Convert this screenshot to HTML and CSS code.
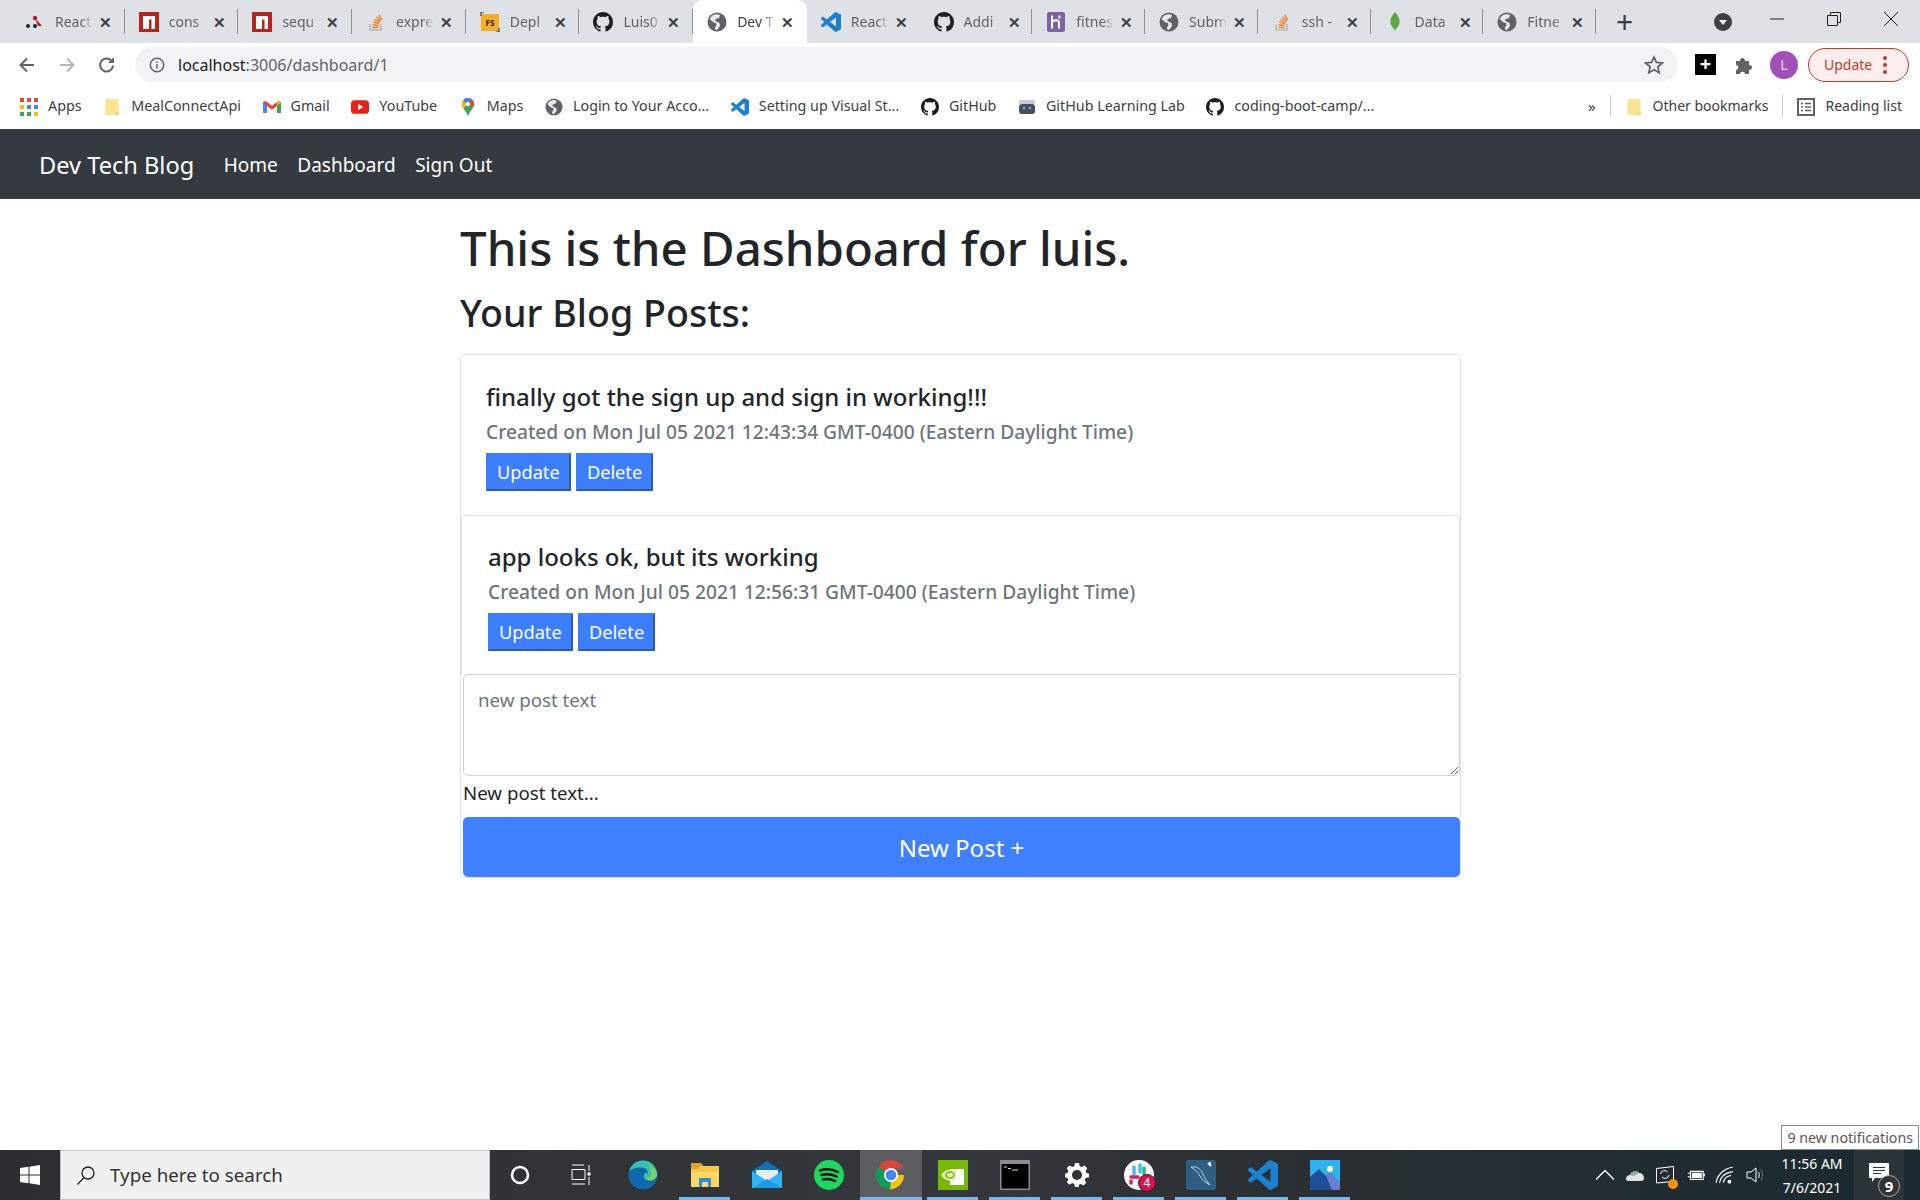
FILE: index.html
```html
<!doctype html>
<html>
<head>
<title>Dev Tech Blog</title>
<link rel="stylesheet" href="styles.css">
</head>
<body>

<!-- shared icons -->
<svg class="sprite">
  <symbol id="globe" viewBox="0 0 20 20">
    <circle cx="10" cy="10" r="9.5" fill="#5f6368"/>
    <path d="M9 2.2C6 2.6 3.8 4.4 2.7 7l3.8 3.6 2.6.4.3 2.6-1.6 2.2.7 2c.5.1 1 .1 1.5.1l3-4-.4-2.6L9.600 9.600 7.800 8.200 9.800 6.600 12 6.200 13 3C11.800 2.400 10.400 2.100 9 2.200z" fill="#e8eaed"/>
  </symbol>
  <symbol id="gh" viewBox="0 0 16 16">
    <path d="M8 0C3.58 0 0 3.58 0 8c0 3.54 2.29 6.53 5.47 7.59.4.07.55-.17.55-.38 0-.19-.01-.82-.01-1.49-2.01.37-2.53-.49-2.69-.94-.09-.23-.48-.94-.82-1.13-.28-.15-.68-.52-.01-.53.63-.01 1.08.58 1.23.82.72 1.21 1.87.87 2.33.66.07-.52.28-.87.51-1.07-1.78-.2-3.64-.89-3.64-3.95 0-.87.31-1.59.82-2.15-.08-.2-.36-1.02.08-2.12 0 0 .67-.21 2.2.82.64-.18 1.32-.27 2-.27.68 0 1.36.09 2 .27 1.53-1.04 2.2-.82 2.2-.82.44 1.1.16 1.92.08 2.12.51.56.82 1.27.82 2.15 0 3.07-1.87 3.75-3.65 3.95.29.25.54.73.54 1.48 0 1.07-.01 1.93-.01 2.2 0 .21.15.46.55.38A8.013 8.013 0 0016 8c0-4.42-3.58-8-8-8z" fill="#1b1f23"/>
  </symbol>
  <symbol id="vsc" viewBox="0 0 24 24">
    <path d="M23.15 2.587L18.21.21a1.494 1.494 0 0 0-1.705.29l-9.46 8.63-4.12-3.128a.999.999 0 0 0-1.276.057L.327 7.261A1 1 0 0 0 .326 8.74L3.899 12 .326 15.26a1 1 0 0 0 .001 1.479L1.65 17.94a.999.999 0 0 0 1.276.057l4.12-3.128 9.46 8.63a1.492 1.492 0 0 0 1.704.29l4.942-2.377A1.5 1.5 0 0 0 24 20.06V3.939a1.5 1.5 0 0 0-.85-1.352zm-5.146 14.861L10.826 12l7.178-5.448v10.896z" fill="#1b80cf"/>
  </symbol>
  <symbol id="so" viewBox="0 0 20 20">
    <path d="M4 12v6h11v-6" fill="none" stroke="#bcbbbb" stroke-width="1.600"/>
    <path d="M6.500 15.500h6M6.700 12.800l6 .6M7.300 10l5.800 1.600M8.500 7.300l5.200 3M10.400 4.800l4.300 4.200M13 2.800l2.700 5.200" fill="none" stroke="#f48024" stroke-width="1.500"/>
  </symbol>
  <symbol id="npm" viewBox="0 0 20 20">
    <rect width="20" height="20" fill="#bd2219"/>
    <path d="M4 4h12v13h-3.500V7.500H10V17H4z" fill="#fff"/>
  </symbol>
  <symbol id="folder" viewBox="0 0 16 20">
    <path d="M1.500 1h13c.5 0 .8.300.8.800v16.400c0 .5-.3.800-.8.800h-13c-.5 0-.8-.3-.8-.8V1.800c0-.5.300-.8.800-.8z" fill="#fbe38f"/>
    <path d="M11.500 16h4v3h-4z" fill="#f4d264"/>
  </symbol>
</svg>

<div class="tabstrip">
  <div class="tab">
    <svg class="ico" viewBox="0 0 20 20"><circle cx="3" cy="14" r="2" fill="#222"/><circle cx="10" cy="6" r="2.200" fill="#b71c1c"/><circle cx="10" cy="14" r="2" fill="#222"/><path d="M10 6l7 8h-4z" fill="#b71c1c"/></svg>
    <span class="tab-title">React</span><span class="tab-x">&#10005;</span>
  </div>
  <div class="tab"><svg class="ico"><use href="#npm"/></svg><span class="tab-title">cons</span><span class="tab-x">&#10005;</span></div>
  <div class="tab"><svg class="ico"><use href="#npm"/></svg><span class="tab-title">sequ</span><span class="tab-x">&#10005;</span></div>
  <div class="tab"><svg class="ico"><use href="#so"/></svg><span class="tab-title">expre</span><span class="tab-x">&#10005;</span></div>
  <div class="tab">
    <svg class="ico" viewBox="0 0 20 20"><rect x="1" y="2" width="18" height="17" fill="#f5ae27"/><path d="M1 4V0h3M19 16v4h-3" fill="none" stroke="#222"/><text x="10" y="14" class="fs-text">FS</text></svg>
    <span class="tab-title">Depl</span><span class="tab-x">&#10005;</span>
  </div>
  <div class="tab"><svg class="ico"><use href="#gh"/></svg><span class="tab-title">Luis0</span><span class="tab-x">&#10005;</span></div>
  <div class="tab tab-on"><svg class="ico"><use href="#globe"/></svg><span class="tab-title">Dev T</span><span class="tab-x">&#10005;</span></div>
  <div class="tab tab-tail"><svg class="ico"><use href="#vsc"/></svg><span class="tab-title">React</span><span class="tab-x">&#10005;</span></div>
  <div class="tab tab-tail"><svg class="ico"><use href="#gh"/></svg><span class="tab-title">Addi</span><span class="tab-x">&#10005;</span></div>
  <div class="tab tab-tail">
    <svg class="ico" viewBox="0 0 20 20"><rect x="1" width="18" height="20" rx="2.500" fill="#7d62a8"/><path d="M6 3.500v13M6 10c2-2 6-2.500 7 0v6.500M13.500 3.500v3" fill="none" stroke="#fff" stroke-width="2"/></svg>
    <span class="tab-title">fitnes</span><span class="tab-x">&#10005;</span>
  </div>
  <div class="tab tab-tail"><svg class="ico"><use href="#globe"/></svg><span class="tab-title">Subm</span><span class="tab-x">&#10005;</span></div>
  <div class="tab tab-tail"><svg class="ico"><use href="#so"/></svg><span class="tab-title">ssh -</span><span class="tab-x">&#10005;</span></div>
  <div class="tab tab-tail">
    <svg class="ico" viewBox="0 0 20 20"><path d="M10 0c3.500 4 5 7 4.500 11-.4 3-2.500 5-4 6.500L10 20l-.5-2.500c-1.500-1.500-3.600-3.500-4-6.500C5 7 6.500 4 10 0z" fill="#5da545"/></svg>
    <span class="tab-title">Data</span><span class="tab-x">&#10005;</span>
  </div>
  <div class="tab tab-tail"><svg class="ico"><use href="#globe"/></svg><span class="tab-title">Fitne</span><span class="tab-x">&#10005;</span></div>
  <span class="tab-new">+</span>
  <svg class="tab-search" viewBox="0 0 18 18"><circle cx="9" cy="9" r="9" fill="#3c4043"/><path d="M5 7h8l-4 5z" fill="#fff"/></svg>
  <div class="winbtns">
    <svg class="winbtn" viewBox="0 0 14 14"><path d="M0 7h14" stroke="#222" fill="none"/></svg>
    <svg class="winbtn" viewBox="0 0 14 14"><path d="M.5 3.500h10v10H.5zM3.500 3.500v-3h10v10h-3" stroke="#222" fill="none"/></svg>
    <svg class="winbtn" viewBox="0 0 14 14"><path d="M0 0l14 14M14 0L0 14" stroke="#222" fill="none"/></svg>
  </div>
</div>

<div class="toolbar">
  <svg class="tool" viewBox="0 0 20 20"><path d="M17 10H4M10 3.500L3.500 10l6.500 6.500" fill="none" stroke="#5f6368" stroke-width="2"/></svg>
  <svg class="tool" viewBox="0 0 20 20"><path d="M3 10h13M10 3.500l6.500 6.500-6.500 6.500" fill="none" stroke="#b4b7bb" stroke-width="2"/></svg>
  <svg class="tool" viewBox="0 0 20 20"><path d="M16 10.500A6.500 6.500 0 1 1 14.200 5.500" fill="none" stroke="#5f6368" stroke-width="2"/><path d="M17 2v6h-6z" fill="#5f6368"/></svg>
  <div class="omnibox">
    <svg class="omni-info" viewBox="0 0 16 16"><circle cx="8" cy="8" r="6.700" fill="none" stroke="#5f6368" stroke-width="1.500"/><path d="M8 7v4.500M8 4.500v1.400" stroke="#5f6368" stroke-width="1.500"/></svg>
    <span class="url">localhost<span class="url-path">:3006/dashboard/1</span></span>
    <svg class="omni-star" viewBox="0 0 20 20"><path d="M10 2l2.400 5.400 5.900.6-4.400 3.900 1.300 5.800L10 14.700l-5.200 3 1.300-5.800L1.700 8l5.900-.6z" fill="none" stroke="#5f6368" stroke-width="1.700"/></svg>
  </div>
  <div class="ext-plus">+</div>
  <svg class="ext-puzzle" viewBox="0 0 20 20"><path d="M2 6h4c0-4 5-4 5 0h4v4c4 0 4 5 0 5v4h-4c0-3-5-3-5 0H2v-4c3 0 3-5 0-5z" fill="#5f6368"/></svg>
  <div class="avatar">L</div>
  <div class="update">Update<span class="update-dots"><i></i><i></i><i></i></span></div>
</div>

<div class="bookmarks">
  <div class="bm">
    <svg class="ico-bm" viewBox="0 0 18 18"><g fill="#ea4335"><rect width="4" height="4"/><rect x="7" width="4" height="4"/><rect x="14" width="4" height="4"/></g><g fill="#fbbc04"><rect y="7" width="4" height="4"/></g><g fill="#4285f4"><rect x="7" y="7" width="4" height="4"/><rect x="14" y="7" width="4" height="4"/></g><g fill="#34a853"><rect y="14" width="4" height="4"/><rect x="7" y="14" width="4" height="4"/></g><rect x="14" y="14" width="4" height="4" fill="#fbbc04"/></svg>
    Apps
  </div>
  <div class="bm"><svg class="ico-bm"><use href="#folder"/></svg>MealConnectApi</div>
  <div class="bm">
    <svg class="ico-bm" viewBox="0 0 20 16"><path d="M0 3v11.500h4.500V7L10 11l5.500-4v7.500H20V3l-2.500-2L10 6.500 2.500 1z" fill="#ea4335"/><path d="M0 3v11.500h4.500V6.500z" fill="#4285f4"/><path d="M20 3v11.500h-4.500V6.500z" fill="#34a853"/><path d="M20 3l-4.500 3.500V2.500l2-1.500z" fill="#fbbc04"/></svg>
    Gmail
  </div>
  <div class="bm">
    <svg class="ico-bm" viewBox="0 0 20 16"><rect width="20" height="15" y=".5" rx="4" fill="#e62117"/><path d="M8 4.500l5.500 3.500L8 11.500z" fill="#fff"/></svg>
    YouTube
  </div>
  <div class="bm">
    <svg class="ico-bm" viewBox="0 0 16 22"><path d="M8 0a7.500 7.500 0 0 1 7.500 7.500C15.500 12 10.500 15 8 22 5.500 15 .5 12 .5 7.500A7.500 7.500 0 0 1 8 0z" fill="#34a853"/><path d="M2 3l5 5-5 5C.8 11.500.5 9 .5 7.500.5 5.800 1 4.200 2 3z" fill="#fbbc04"/><path d="M2 3a7.500 7.500 0 0 1 6-3 7 7 0 0 1 4.500 1.600L7 8z" fill="#4285f4"/><path d="M12.500 1.600a7.500 7.500 0 0 1 3 5.900c0 1-.3 2-.8 3L7 8z" fill="#ea4335"/><circle cx="8" cy="7.500" r="2.500" fill="#fff"/></svg>
    Maps
  </div>
  <div class="bm"><svg class="ico-bm"><use href="#globe"/></svg>Login to Your Acco...</div>
  <div class="bm"><svg class="ico-bm"><use href="#vsc"/></svg>Setting up Visual St...</div>
  <div class="bm"><svg class="ico-bm"><use href="#gh"/></svg>GitHub</div>
  <div class="bm">
    <svg class="ico-bm" viewBox="0 0 18 18"><rect x="1" y="2" width="16" height="4" fill="#c9ccd1"/><rect x="1" y="6" width="16" height="10" rx="3" fill="#44505e"/><circle cx="6" cy="10" r="1.200" fill="#7fb2e0"/><circle cx="12" cy="10" r="1.200" fill="#7fb2e0"/></svg>
    GitHub Learning Lab
  </div>
  <div class="bm"><svg class="ico-bm"><use href="#gh"/></svg>coding-boot-camp/...</div>
  <div class="bm-right">
    <span class="bm-more">&raquo;</span>
    <span class="bm-sep"></span>
    <div class="bm"><svg class="ico-bm"><use href="#folder"/></svg>Other bookmarks</div>
    <span class="bm-sep"></span>
    <div class="bm">
      <svg class="ico-bm" viewBox="0 0 18 18"><rect x="1" y="1" width="16" height="16" fill="none" stroke="#5f6368" stroke-width="2"/><path d="M4 5.500h2M8 5.500h6M4 9h2M8 9h6M4 12.500h2M8 12.500h6" stroke="#5f6368" stroke-width="1.500"/></svg>
      Reading list
    </div>
  </div>
</div>

<nav class="navbar">
  <a class="brand">Dev Tech Blog</a>
  <a class="nav-link">Home</a>
  <a class="nav-link">Dashboard</a>
  <a class="nav-link">Sign Out</a>
</nav>

<main class="page">
  <h1>This is the Dashboard for luis.</h1>
  <h2>Your Blog Posts:</h2>
  <div class="card">
    <div class="post">
      <h5>finally got the sign up and sign in working!!!</h5>
      <h6>Created on Mon Jul 05 2021 12:43:34 GMT-0400 (Eastern Daylight Time)</h6>
      <button class="btn">Update</button>
      <button class="btn">Delete</button>
    </div>
    <div class="post post-boxed">
      <h5>app looks ok, but its working</h5>
      <h6>Created on Mon Jul 05 2021 12:56:31 GMT-0400 (Eastern Daylight Time)</h6>
      <button class="btn">Update</button>
      <button class="btn">Delete</button>
    </div>
    <form class="new-post">
      <textarea placeholder="new post text"></textarea>
      <label>New post text...</label>
      <button type="button" class="btn-new">New Post +</button>
    </form>
  </div>
</main>

<div class="taskbar">
  <div class="start">
    <svg viewBox="0 0 20 20" width="20" height="20"><path d="M0 3l8.500-1.200V9.500H0zM9.500 1.700L20 0v9.500H9.500zM0 10.500h8.500v7.700L0 17zM9.500 10.500H20V20L9.500 18.300z" fill="#fff"/></svg>
  </div>
  <div class="search">
    <svg viewBox="0 0 20 20" width="20" height="20"><circle cx="12" cy="8" r="6" fill="none" stroke="#222" stroke-width="1.300"/><path d="M8 12.500L1.500 19.500" stroke="#222" stroke-width="1.300"/></svg>
    Type here to search
  </div>
  <div class="tb-tool">
    <svg viewBox="0 0 20 20" width="20" height="20"><circle cx="10" cy="10" r="8" fill="none" stroke="#fff" stroke-width="2.500"/></svg>
  </div>
  <div class="tb-tool tb-view">
    <svg viewBox="0 0 20 22" width="20" height="22"><path d="M1 1h12M1 5.500h13v10H1zM1 20h13M18 1v6M18 13v8" fill="none" stroke="#fff"/><rect x="16.500" y="8.500" width="3" height="3" fill="#fff"/></svg>
  </div>
  <div class="tb-app">
    <svg viewBox="0 0 30 30" width="30" height="30"><circle cx="15" cy="15" r="14.500" fill="#0f68b0"/><path d="M1 12C3 4 9 .5 15 .5c8 0 14 6 14 14 0 3-3 6-7 6-5 0-7-3-6-6 1-2 3-2 4-1 0-4-3-6-7-6-6 0-11 2-12 4.500z" fill="#35c1b0"/><path d="M20 5c5 2 9 5 9 9.500 0 3-3 6-7 6-3 0-4-1-5-2 4 0 6-2 6-5 0-3-1-6-3-8.500z" fill="#70d65e"/></svg>
  </div>
  <div class="tb-app tb-run">
    <svg viewBox="0 0 30 30" width="30" height="30"><path d="M1 3h10l2 3h16v21H1z" fill="#f7c64a"/><path d="M1 3h10l2 3h-3l-2 3H1z" fill="#e2a521"/><rect x="1" y="12" width="28" height="15" fill="#fbd765"/><path d="M9 18h12v9h-3v-5h-6v5H9z" fill="#2d8fd6"/></svg>
  </div>
  <div class="tb-app">
    <svg viewBox="0 0 30 30" width="30" height="30"><path d="M15 1L0 11v17h30V11z" fill="#0f6fb8"/><path d="M4 10h22v8l-11 6-11-6z" fill="#e8eef3"/><path d="M0 11l15 10 15-10v17H0z" fill="#30b5f2"/><path d="M0 28l15-9 15 9z" fill="#1c9ce6"/></svg>
  </div>
  <div class="tb-app">
    <svg viewBox="0 0 30 30" width="30" height="30"><circle cx="15" cy="15" r="15" fill="#1ed760"/><path d="M6 10.500c6-2 12-1.500 18 1.500M7.500 15c5-1.500 10-1 15 1.500M9 19.500c4-1 8-.6 12 1.500" fill="none" stroke="#111" stroke-width="2.500" stroke-linecap="round"/></svg>
  </div>
  <div class="tb-app tb-run tb-active">
    <svg viewBox="0 0 30 30" width="30" height="30"><path d="M15 15L2.500 7A14.500 14.500 0 0 1 28 8.500H15z" fill="#db4437"/><path d="M15 15h13A14.500 14.500 0 0 1 14 29.500z" fill="#f4c20d"/><path d="M15 15l-1 14.500A14.500 14.500 0 0 1 2.500 7z" fill="#0f9d58"/><circle cx="15" cy="15" r="7" fill="#fff"/><circle cx="15" cy="15" r="5.300" fill="#4285f4"/></svg>
  </div>
  <div class="tb-app tb-run">
    <svg viewBox="0 0 30 30" width="30" height="30"><rect width="30" height="30" fill="#76b900"/><path d="M12 9h14v16H12z" fill="#fff"/><path d="M3 15c3-5 9-7 15-5v10c-5 2-11 1-15-5z" fill="#e3f0bd"/><ellipse cx="12" cy="15" rx="4" ry="3" fill="none" stroke="#76b900" stroke-width="1.500"/></svg>
  </div>
  <div class="tb-app tb-run">
    <svg viewBox="0 0 30 30" width="30" height="30"><rect width="30" height="30" fill="#8a8d90"/><rect x="1.500" y="4" width="27" height="24.500" fill="#000"/><path d="M4 7h3M8 8.500l3 0M12 10h6" stroke="#ddd"/></svg>
  </div>
  <div class="tb-app tb-run">
    <svg viewBox="0 0 24 24" width="24" height="24"><path d="M10 0h4l.7 3.200 2 .9L19.500 2.400l2.800 2.800-1.700 2.800.9 2L24 10.700v3.600l-3.500.8-.9 2 1.700 2.700-2.800 2.800-2.800-1.700-2 .9L14 24h-4l-.7-3.100-2-.9-2.800 1.700-2.800-2.800L3.400 17l-.9-2L0 14.300v-3.600l2.500-.7.900-2L1.700 5.200l2.800-2.800 2.800 1.700 2-.9z" fill="#fff"/><circle cx="12" cy="12" r="5" fill="#2f3336"/></svg>
  </div>
  <div class="tb-app tb-run">
    <span class="slack">
      <svg viewBox="0 0 30 30" width="30" height="30"><circle cx="15" cy="15" r="15" fill="#fff"/><path d="M10 7v7M16 5v7" stroke="#36c5f0" stroke-width="3.500" stroke-linecap="round"/><path d="M7 17h7M7 23v-2" stroke="#e01e5a" stroke-width="3.500" stroke-linecap="round"/><path d="M20 8v6" stroke="#2eb67d" stroke-width="3.500" stroke-linecap="round"/></svg>
      <span class="slack-badge">4</span>
    </span>
  </div>
  <div class="tb-app tb-run">
    <svg viewBox="0 0 30 30" width="30" height="30"><rect width="30" height="30" rx="2" fill="#2e5f82"/><path d="M5 7c6-1 10 2 12 7 1 3 3 6 7 11-5-3-8-5-10-9C12 12 9 10 5 7z" fill="none" stroke="#c4d4de"/><path d="M22 3l3 3M24 2v3" stroke="#fff" stroke-width="2"/></svg>
  </div>
  <div class="tb-app tb-run">
    <svg viewBox="0 0 24 24" width="30" height="30"><use href="#vsc"/></svg>
  </div>
  <div class="tb-app tb-run">
    <svg viewBox="0 0 30 30" width="30" height="30"><rect width="30" height="30" fill="#2cb2ec"/><path d="M0 30V17l9-8 7 7 4-3 10 10v7z" fill="#1f4f96"/><path d="M16 16l4-3 10 10v7H22z" fill="#6d7ed0"/><circle cx="20" cy="9" r="3" fill="#fff"/></svg>
  </div>

  <div class="tray">
    <svg class="tray-ico" viewBox="0 0 18 18"><path d="M1 13l8-8 8 8" fill="none" stroke="#fff" stroke-width="1.200"/></svg>
    <svg class="tray-ico" viewBox="0 0 20 16"><path d="M1 12c0-3 2-4 4-4 1-4 7-5 9-2 3 0 5 2 5 5 0 2-1 3-3 3H3c-1 0-2-1-2-2z" fill="#dfe3e5"/><path d="M5 8c1-4 7-5 9-2L9 9z" fill="#9aa2a6"/></svg>
    <span class="tray-sync">
      <svg viewBox="0 0 20 20" width="20" height="20"><path d="M1.500 3.500l17-2v15l-17 1.500z" fill="none" stroke="#fff"/><path d="M5.500 9a4 4 0 0 1 7-2M14 10a4 4 0 0 1-7 2" fill="none" stroke="#fff"/></svg>
      <i class="tray-dot"></i>
    </span>
    <svg class="tray-ico" viewBox="0 0 22 14"><path d="M3 5h3M3 9h3M6 3h14v9H6z" fill="none" stroke="#fff" stroke-width="1.200"/><rect x="7.500" y="4.500" width="11" height="6" fill="#fff"/><rect x="20" y="5.500" width="2" height="3" fill="#fff"/></svg>
    <svg class="tray-ico" viewBox="0 0 18 18"><path d="M1 16C2 9 8 3 16 2M4 16c1-5 5-9 12-10M7.500 16c.5-3 3-6 7-6.500" fill="none" stroke="#fff" stroke-width="1"/><circle cx="13" cy="15" r="1.700" fill="#fff"/></svg>
    <svg class="tray-ico" viewBox="0 0 20 20"><path d="M2 7h4l5-4v14l-5-4H2z" fill="none" stroke="#fff"/><path d="M13.500 7c1 2 1 4 0 6" fill="none" stroke="#fff"/><path d="M16 4.500c2 3.500 2 7.500 0 11" fill="none" stroke="#777"/></svg>
  </div>
  <div class="clock"><span>11:56 AM</span><span>7/6/2021</span></div>
  <div class="notif">
    <svg viewBox="0 0 20 20" width="20" height="20"><path d="M0 0h20v15H6l-3 4v-4H0z" fill="#fff"/><path d="M4 4.500h12M4 7.500h12M4 10.500h8" stroke="#333"/></svg>
    <span class="notif-badge">9</span>
  </div>
  <div class="tooltip">9 new notifications</div>
</div>

</body>
</html>
```

FILE: styles.css
```css
html, body {
  height: 100%;
}

body {
  margin: 0;
  display: flex;
  flex-direction: column;
  overflow: hidden;
  font-family: "Noto Sans", "Open Sans", sans-serif;
  background: #fff;
  color: #212529;
}

.sprite {
  display: none;
}

/* browser tabs */

.tabstrip {
  height: 43px;
  flex: none;
  display: flex;
  align-items: center;
  padding-left: 11px;
  background: #dee1e6;
}

.tab {
  position: relative;
  width: 113.7px;
  height: 43px;
  flex: none;
  box-sizing: border-box;
  display: flex;
  align-items: center;
  padding-left: 14px;
  font-size: 14px;
  color: #5f6368;
}

.tab-tail {
  width: 112.75px;
}

.tab::after {
  content: "";
  position: absolute;
  right: 0;
  top: 9px;
  height: 25px;
  width: 1px;
  background: #8d9094;
}

.tab-on {
  background: #fff;
  border-radius: 9px 9px 0 0;
  color: #3c4043;
}

.tab-on::after,
.tab-on + .tab::after {
  display: none;
}

.ico {
  width: 20px;
  height: 20px;
  flex: none;
}

.fs-text {
  font-size: 8px;
  font-weight: 700;
  text-anchor: middle;
  fill: #222;
}

.tab-title {
  width: 38px;
  margin-left: 10px;
  overflow: hidden;
  white-space: nowrap;
  -webkit-mask-image: linear-gradient(90deg, #000 70%, transparent);
  mask-image: linear-gradient(90deg, #000 70%, transparent);
}

.tab-x {
  margin-left: 6px;
  font-size: 15px;
  font-weight: 700;
  color: #3c4043;
}

.tab-new {
  margin-left: 20px;
  font-size: 30px;
  font-weight: 400;
  line-height: 30px;
  color: #3c4043;
}

.tab-search {
  width: 18px;
  height: 18px;
  margin-left: 81px;
}

.winbtns {
  margin-left: auto;
  display: flex;
  gap: 43px;
  padding-right: 22px;
  padding-bottom: 6px;
}

.winbtn {
  width: 14px;
  height: 14px;
}

/* address bar */

.toolbar {
  height: 43px;
  flex: none;
  display: flex;
  align-items: center;
  padding-left: 17px;
  box-sizing: border-box;
}

.tool {
  width: 20px;
  height: 20px;
  margin-right: 20px;
}

.omnibox {
  width: 1543px;
  height: 35px;
  margin-left: -2px;
  flex: none;
  box-sizing: border-box;
  display: flex;
  align-items: center;
  padding: 0 14px 0 14px;
  border-radius: 18px;
  background: #f1f3f4;
  font-size: 16px;
}

.omni-info {
  width: 16px;
  height: 16px;
  margin-right: 13px;
}

.url {
  color: #202124;
}

.url-path {
  color: #5f6368;
}

.omni-star {
  width: 20px;
  height: 20px;
  margin-left: auto;
}

.ext-plus {
  width: 21px;
  height: 21px;
  margin-left: 17px;
  background: #000;
  color: #fff;
  font-size: 20px;
  font-weight: 700;
  line-height: 20px;
  text-align: center;
}

.ext-puzzle {
  width: 20px;
  height: 20px;
  margin-left: 18px;
}

.avatar {
  width: 28px;
  height: 28px;
  margin-left: 16px;
  border-radius: 50%;
  background: #a34fb8;
  color: #e9d5ee;
  font-size: 14px;
  line-height: 28px;
  text-align: center;
}

.update {
  width: 101px;
  height: 34px;
  margin-left: 10px;
  box-sizing: border-box;
  display: flex;
  align-items: center;
  padding-left: 15px;
  border: 1px solid #c5392f;
  border-radius: 17px;
  background: #fbeeed;
  color: #c5392f;
  font-size: 14px;
}

.update-dots {
  display: flex;
  flex-direction: column;
  gap: 3px;
  margin-left: 11px;
}

.update-dots i {
  width: 4px;
  height: 4px;
  border-radius: 50%;
  background: #c5392f;
}

/* bookmarks */

.bookmarks {
  height: 42px;
  flex: none;
  display: flex;
  align-items: center;
  gap: 21.6px;
  padding-left: 20px;
  padding-right: 18px;
  padding-bottom: 3px;
  box-sizing: border-box;
  font-size: 14.3px;
  color: #3c4043;
  white-space: nowrap;
}

.bm {
  display: flex;
  align-items: center;
  gap: 10px;
}

.ico-bm {
  width: 18px;
  height: 18px;
  flex: none;
  position: relative;
  top: 1px;
}

.bm-right {
  margin-left: auto;
  display: flex;
  align-items: center;
  gap: 14px;
  font-size: 14px;
}

.bm-more {
  font-size: 15px;
}

.bm-sep {
  width: 1px;
  height: 21px;
  background: #c9cbce;
}

/* site navbar */

.navbar {
  height: 70px;
  flex: none;
  box-sizing: border-box;
  display: flex;
  align-items: center;
  gap: 19.5px;
  padding-left: 39px;
  padding-top: 2px;
  margin-top: 1px;
  background: #343a40;
  color: #fff;
  font-size: 19px;
}

.brand {
  margin-right: 10px;
  font-size: 23.6px;
}

/* page body */

.page {
  flex: 1;
  width: 1001px;
  margin-left: 460px;
}

h1 {
  margin: 16px 0 2px;
  font-size: 47.4px;
  font-weight: 500;
  line-height: 66px;
}

h2 {
  margin: 0 0 11px;
  font-size: 37.6px;
  font-weight: 500;
  line-height: 60px;
}

.card {
  border: 1px solid #dfe1e4;
  border-radius: 5px;
}

.post {
  height: 160px;
  box-sizing: border-box;
  padding: 24px 25px 0;
}

.post-boxed {
  height: 159px;
  padding-top: 23px;
  padding-left: 26px;
  border: 1px solid #dfe1e4;
  border-bottom: 0;
  border-radius: 5px 5px 0 0;
}

h5 {
  margin: 0;
  font-size: 24px;
  font-weight: 500;
  line-height: 36px;
}

h6 {
  margin: 3px 0 7px;
  font-size: 19.2px;
  font-weight: 500;
  line-height: 28px;
  color: #6c757d;
}

.btn {
  height: 38px;
  margin: 0 1px 0 0;
  padding: 0 9px;
  font-family: inherit;
  font-size: 18.2px;
  color: #fff;
  background: #3d7eff;
  border: 2px solid #3d7eff;
  border-right-color: #2a5bb5;
  border-bottom-color: #2a5bb5;
}

.new-post {
  display: flex;
  flex-direction: column;
  padding: 0 0 0 2px;
}

textarea {
  height: 102px;
  box-sizing: border-box;
  padding: 12px 14px;
  font-family: inherit;
  font-size: 18.7px;
  color: #212529;
  border: 1px solid #ced4da;
  border-radius: 5px;
}

textarea::placeholder {
  color: #6c757d;
}

label {
  font-size: 18.7px;
  line-height: 26px;
  margin: 4px 0 11px;
}

.btn-new {
  height: 60px;
  font-family: inherit;
  font-size: 24px;
  color: #fff;
  background: #3f80ff;
  border: 0;
  border-radius: 5px;
}

/* windows taskbar */

.taskbar {
  position: relative;
  height: 50px;
  flex: none;
  display: flex;
  align-items: center;
  background: linear-gradient(90deg, #2c2e30, #34373b 50%, #2a2f33 68%, #1a2a30);
  color: #fff;
}

.start {
  width: 60px;
  height: 50px;
  display: flex;
  align-items: center;
  justify-content: center;
}

.search {
  width: 430px;
  height: 50px;
  box-sizing: border-box;
  display: flex;
  align-items: center;
  gap: 14px;
  padding-left: 15px;
  background: #f0f0f0;
  border: 1px solid #c3c3c3;
  color: #333;
  font-size: 18.8px;
}

.tb-tool {
  width: 60px;
  display: flex;
  justify-content: center;
}

.tb-view {
  width: 62px;
}

.tb-app {
  position: relative;
  width: 62px;
  height: 50px;
  display: flex;
  align-items: center;
  justify-content: center;
}

.tb-run::after {
  content: "";
  position: absolute;
  left: 5px;
  right: 6px;
  bottom: 0;
  height: 3px;
  background: #76b9ed;
}

.tb-active {
  background: #5b5d60;
}

.tb-active::after {
  left: 0;
  right: 0;
}

.slack {
  position: relative;
  display: flex;
}

.slack-badge {
  position: absolute;
  right: -2px;
  bottom: -2px;
  width: 16px;
  height: 16px;
  border: 1px solid #4a1024;
  border-radius: 50%;
  background: #d9134f;
  color: #fff;
  font-size: 12px;
  line-height: 16px;
  text-align: center;
}

.tray {
  margin-left: auto;
  display: flex;
  align-items: center;
}

.tray-ico {
  width: 20px;
  height: 20px;
  margin: 0 5px;
}

.tray-sync {
  position: relative;
  display: flex;
  margin: 0 5px;
}

.tray-dot {
  position: absolute;
  right: -3px;
  bottom: -4px;
  width: 10px;
  height: 10px;
  border-radius: 50%;
  background: #f7930e;
}

.clock {
  width: 84px;
  display: flex;
  flex-direction: column;
  align-items: center;
  gap: 3px;
  font-size: 14px;
  line-height: 21px;
}

.notif {
  position: relative;
  width: 50px;
  height: 50px;
  margin-right: 16px;
  box-sizing: border-box;
  padding-bottom: 4px;
  display: flex;
  align-items: center;
  justify-content: center;
  background: #2a3439;
}

.notif-badge {
  position: absolute;
  left: 24px;
  top: 25px;
  width: 20px;
  height: 20px;
  border: 1px solid #aaa;
  border-radius: 50%;
  background: #333;
  font-size: 15px;
  font-weight: 700;
  line-height: 20px;
  text-align: center;
}

.tooltip {
  position: absolute;
  right: 1px;
  top: -25px;
  height: 25px;
  box-sizing: border-box;
  padding: 0 5px;
  border: 1px solid #8a8a8a;
  background: #fff;
  color: #575757;
  font-size: 14.2px;
  line-height: 23px;
  white-space: nowrap;
}
```
